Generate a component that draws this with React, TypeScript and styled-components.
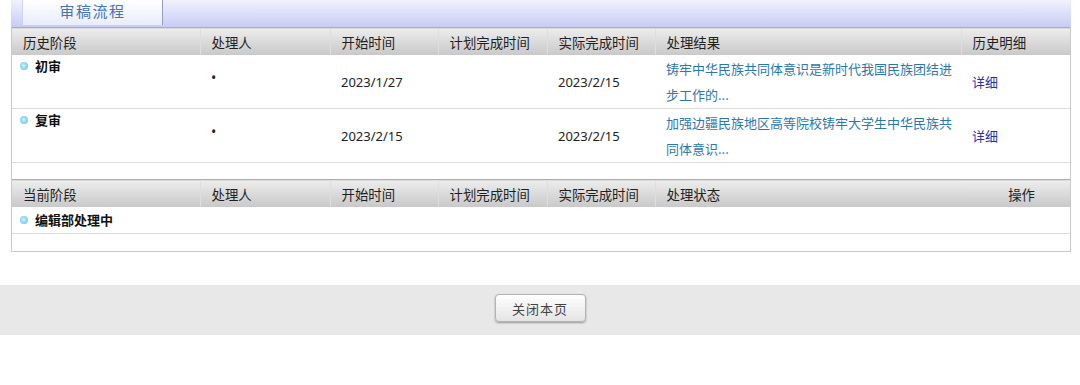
import React from "react";
import styled, { createGlobalStyle } from "styled-components";

const Global = createGlobalStyle`
  html, body { margin: 0; padding: 0; background: #fff; }
  body { font-family: "Noto Sans CJK SC", "Noto Sans", sans-serif; font-size: 13px; color: #333; }
`;

const Page = styled.div`
  width: 1080px;
  height: 385px;
  overflow: hidden;
  background: #fff;
`;

const Panel = styled.div`
  margin-left: 11px;
  width: 1060px;
`;

const TabBar = styled.div`
  height: 27px;
  padding-left: 11px;
  background: linear-gradient(#f1f2fd, #c7ccf4);
  display: flex;
  align-items: flex-start;
`;

const Tab = styled.div`
  box-sizing: border-box;
  width: 141px;
  height: 25px;
  background: linear-gradient(#ffffff, #e9ecfb);
  border-left: 1px solid #cfd3e8;
  border-right: 1px solid #969cc6;
  color: #4674b4;
  font-size: 15px;
  letter-spacing: 1.5px;
  line-height: 21px;
  text-align: center;
`;

const Frame = styled.div`
  box-sizing: border-box;
  width: 1060px;
  border: 1px solid #c9c9c9;
  border-top: none;
`;

const Table = styled.table`
  width: 100%;
  table-layout: fixed;
  border-collapse: collapse;
`;

const HeadCell = styled.th<{ $divider?: boolean; $align?: string; $padRight?: number }>`
  height: 27px;
  padding: 0 ${(p) => p.$padRight ?? 0}px 0 11px;
  text-align: ${(p) => p.$align ?? "left"};
  font-weight: normal;
  color: #1f1f1f;
  font-size: 13.4px;
  line-height: 20px;
  background: linear-gradient(#ededed, #c8c8c8);
  border-top: 1px solid #adadad;
  border-left: ${(p) => (p.$divider ? "1px solid #dedede" : "none")};
  white-space: nowrap;
`;

const Row = styled.tr<{ $h?: number }>`
  td {
    border-bottom: 1px solid #dcdcdc;
    ${(p) => (p.$h ? `height: ${p.$h}px;` : "")}
  }
`;

const SpacerRow = styled.tr<{ $h: number }>`
  td { height: ${(p) => p.$h}px; padding: 0; }
`;

const Cell = styled.td<{ $top?: boolean; $latin?: boolean; $pl?: number }>`
  padding: 0 0 0 ${(p) => p.$pl ?? 11}px;
  vertical-align: ${(p) => (p.$top ? "top" : "middle")};
  color: #222;
  font-size: 13px;
  line-height: 20px;
  font-family: ${(p) => (p.$latin ? '"Noto Sans", "Noto Sans CJK SC", sans-serif' : "inherit")};
`;

const Handler = styled.span`
  display: block;
  margin-bottom: 8px;
  font-size: 14px;
`;

const Stage = styled.div<{ $pt?: number }>`
  display: flex;
  align-items: center;
  gap: 7px;
  padding-top: ${(p) => p.$pt ?? 0}px;
  font-weight: bold;
  color: #111;
  line-height: 20px;
`;

const Dot = styled.span`
  display: inline-block;
  flex: none;
  width: 8px;
  height: 8px;
  border-radius: 50%;
  background: radial-gradient(circle at 45% 45%, #d2f0fc 0%, #8fd5f2 50%, #5cb9e4 100%);
`;

const ResultCell = styled.td`
  padding: 1px 8px 0 11px;
  vertical-align: middle;
  line-height: 26px;
  font-size: 13px;
  color: #2b78ad;
`;

const Detail = styled.a`
  color: #1f33a6;
  text-decoration: none;
`;

const Footer = styled.div`
  margin-top: 33px;
  height: 50px;
  background: #e8e8e8;
  display: flex;
  align-items: center;
  justify-content: center;
`;

const Button = styled.button`
  box-sizing: border-box;
  width: 91px;
  height: 28px;
  margin-top: -4px;
  border: 1px solid #b3b3b3;
  border-radius: 4px;
  background: linear-gradient(#ffffff, #e4e4e4);
  box-shadow: 0 1px 2px rgba(0, 0, 0, 0.35);
  font-family: "Noto Sans CJK SC", "Noto Sans", sans-serif;
  font-size: 13px;
  letter-spacing: 1px;
  color: #444;
  padding: 0;
`;

const cols = [188, 130, 108, 109, 108, 306, 109];
const histHead = ["历史阶段", "处理人", "开始时间", "计划完成时间", "实际完成时间", "处理结果", "历史明细"];

const history = [
  {
    stage: "初审",
    handler: "•",
    start: "2023/1/27",
    plan: "",
    actual: "2023/2/15",
    result: "铸牢中华民族共同体意识是新时代我国民族团结进步工作的...",
  },
  {
    stage: "复审",
    handler: "•",
    start: "2023/2/15",
    plan: "",
    actual: "2023/2/15",
    result: "加强边疆民族地区高等院校铸牢大学生中华民族共同体意识...",
  },
];

export default function App() {
  return (
    <Page>
      <Global />
      <Panel>
        <TabBar>
          <Tab>审稿流程</Tab>
        </TabBar>
        <Frame>
          <Table>
            <colgroup>
              {cols.map((w, i) => (
                <col key={i} style={{ width: w }} />
              ))}
            </colgroup>
            <tbody>
              <tr>
                {histHead.map((h, i) => (
                  <HeadCell key={h} $divider={i > 0}>
                    {h}
                  </HeadCell>
                ))}
              </tr>
              {history.map((r) => (
                <Row key={r.stage}>
                  <Cell $top $pl={8}>
                    <Stage $pt={1}>
                      <Dot />
                      {r.stage}
                    </Stage>
                  </Cell>
                  <Cell $latin>
                    <Handler>{r.handler}</Handler>
                  </Cell>
                  <Cell $latin>{r.start}</Cell>
                  <Cell $latin>{r.plan}</Cell>
                  <Cell $latin>{r.actual}</Cell>
                  <ResultCell>{r.result}</ResultCell>
                  <Cell>
                    <Detail href="#">详细</Detail>
                  </Cell>
                </Row>
              ))}
              <SpacerRow $h={16}>
                <td colSpan={7} />
              </SpacerRow>
              <tr>
                <HeadCell>当前阶段</HeadCell>
                <HeadCell $divider>处理人</HeadCell>
                <HeadCell $divider>开始时间</HeadCell>
                <HeadCell $divider>计划完成时间</HeadCell>
                <HeadCell $divider>实际完成时间</HeadCell>
                <HeadCell $divider>处理状态</HeadCell>
                <HeadCell $align="right" $padRight={35}>
                  操作
                </HeadCell>
              </tr>
              <Row $h={26}>
                <Cell $pl={8}>
                  <Stage>
                    <Dot />
                    编辑部处理中
                  </Stage>
                </Cell>
                <Cell />
                <Cell />
                <Cell />
                <Cell />
                <Cell />
                <Cell />
              </Row>
              <SpacerRow $h={17}>
                <td colSpan={7} />
              </SpacerRow>
            </tbody>
          </Table>
        </Frame>
      </Panel>
      <Footer>
        <Button type="button">关闭本页</Button>
      </Footer>
    </Page>
  );
}
